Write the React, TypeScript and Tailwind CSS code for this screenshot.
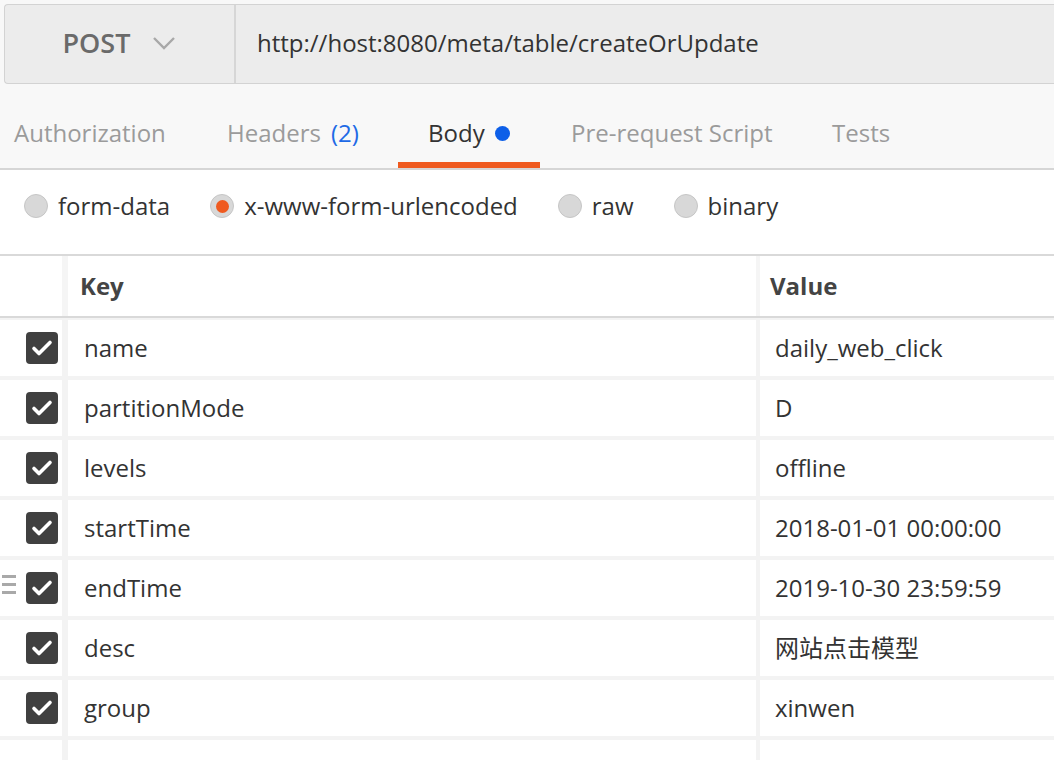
import React from "react";

const rows = [
  { key: "name", value: "daily_web_click" },
  { key: "partitionMode", value: "D" },
  { key: "levels", value: "offline" },
  { key: "startTime", value: "2018-01-01 00:00:00" },
  { key: "endTime", value: "2019-10-30 23:59:59", handle: true },
  { key: "desc", value: "网站点击模型" },
  { key: "group", value: "xinwen" },
  { key: "version", value: "mix", last: true },
];

const tabs = [
  { label: "Authorization", w: "w-[196px]", pl: "pl-[14px]" },
  { label: "Headers", count: "(2)", w: "w-[202px]", pl: "pl-[31px]" },
  { label: "Body", active: true, w: "w-[142px]", pl: "pl-[30px]" },
  { label: "Pre-request Script", w: "w-[261px]", pl: "pl-[31px]" },
  { label: "Tests", w: "w-[200px]", pl: "pl-[31px]" },
];

const modes = [
  { label: "form-data", ml: "ml-[24px]" },
  { label: "x-www-form-urlencoded", checked: true, ml: "ml-[40px]" },
  { label: "raw", ml: "ml-[40px]" },
  { label: "binary", ml: "ml-[40px]" },
];

function Radio({ checked }: { checked?: boolean }) {
  return (
    <span className="w-[24px] h-[24px] rounded-full bg-[#d8d8d8] border border-[#c6c6c6] flex items-center justify-center shrink-0">
      {checked && <span className="w-[13px] h-[13px] rounded-full bg-[#ef5a1f]" />}
    </span>
  );
}

function Check() {
  return (
    <span className="w-[32px] h-[32px] rounded-[4px] bg-[#404040] flex items-center justify-center">
      <svg width="32" height="32" viewBox="0 0 32 32" fill="none">
        <path d="M8 16.5l5 5 11-11" stroke="#fff" strokeWidth="3.6" strokeLinecap="round" strokeLinejoin="round" />
      </svg>
    </span>
  );
}

export default function App() {
  return (
    <div className="w-[1054px] h-[760px] overflow-hidden bg-[#f8f8f8] font-['Open_Sans',sans-serif] text-[#333]">
      {/* request bar */}
      <div className="pt-[4px] pl-[4px]">
        <div className="flex h-[80px] border border-r-0 border-[#d3d3d3] rounded-l-[4px] bg-[#ececec]">
          <div className="w-[231px] border-r-2 border-[#d6d6d6] flex items-center justify-center gap-[22px] pb-[2px]">
            <span className="text-[27px] font-semibold text-[#6a6a6a]">POST</span>
            <svg width="24" height="16" viewBox="0 0 24 16" fill="none">
              <path d="M2 3l10 10 10-10" stroke="#a8a8a8" strokeWidth="2.4" />
            </svg>
          </div>
          <div className="flex items-center pl-[21px] pb-[2px] text-[24px] text-[#333]">
            http://host:8080/meta/table/createOrUpdate
          </div>
        </div>
      </div>

      {/* tabs */}
      <div className="h-[86px] flex items-end border-b-2 border-[#d6d6d6]">
        {tabs.map((t) => (
          <div key={t.label} className={`${t.w} h-[60px] flex flex-col`}>
            <div className={`${t.pl} h-[50px] flex items-center text-[24px] ${t.active ? "text-[#333]" : "text-[#9b9b9b]"}`}>
              <span>{t.label}</span>
              {t.count && <span className="ml-[10px] text-[#1e6ae6]">{t.count}</span>}
              {t.active && <span className="ml-[10px] w-[15px] h-[15px] rounded-full bg-[#0d5fe8]" />}
            </div>
            <div className="h-[4px]" />
            {t.active && <div className="h-[6px] bg-[#ef5a1f]" />}
          </div>
        ))}
      </div>

      {/* body modes */}
      <div className="h-[86px] bg-white flex items-center pb-[12px] border-b-2 border-[#d9d9d9]">
        {modes.map((m) => (
          <label key={m.label} className={`${m.ml} flex items-center gap-[10px] text-[24px] text-[#333]`}>
            <Radio checked={m.checked} />
            <span>{m.label}</span>
          </label>
        ))}
      </div>

      {/* table */}
      <div className="bg-white">
        <div className="flex h-[62px] border-b-2 border-[#d9d9d9]">
          <div className="w-[62px]" />
          <div className="w-[6px] bg-[#f5f5f5]" />
          <div className="w-[688px] flex items-center pl-[12px] text-[24px] font-bold text-[#444]">Key</div>
          <div className="w-[4px] bg-[#f5f5f5]" />
          <div className="flex-1 flex items-center pl-[10px] text-[24px] font-bold text-[#444]">Value</div>
        </div>
        <div className="pt-[2px] bg-[#f3f3f3]">
          {rows.map((r) => (
            <div key={r.key} className="flex h-[60px] border-b-4 border-[#f3f3f3]">
              <div className="w-[62px] bg-white relative flex items-center justify-end pr-[4px]">
                {r.handle && (
                  <div className="absolute left-[2px] top-[15px] flex flex-col gap-[5px]">
                    <span className="block w-[14px] h-[3px] bg-[#a9a9a9]" />
                    <span className="block w-[14px] h-[3px] bg-[#a9a9a9]" />
                    <span className="block w-[14px] h-[3px] bg-[#a9a9a9]" />
                  </div>
                )}
                {!r.last && <Check />}
              </div>
              <div className="w-[6px]" />
              <div className="w-[688px] bg-white flex items-center pl-[16px] text-[24px] text-[#333]">{r.key}</div>
              <div className="w-[4px]" />
              <div className="flex-1 bg-white flex items-center pl-[15px] text-[24px] text-[#333] font-['Open_Sans','Noto_Sans_CJK_SC',sans-serif]">
                {r.value}
              </div>
            </div>
          ))}
        </div>
      </div>
    </div>
  );
}
